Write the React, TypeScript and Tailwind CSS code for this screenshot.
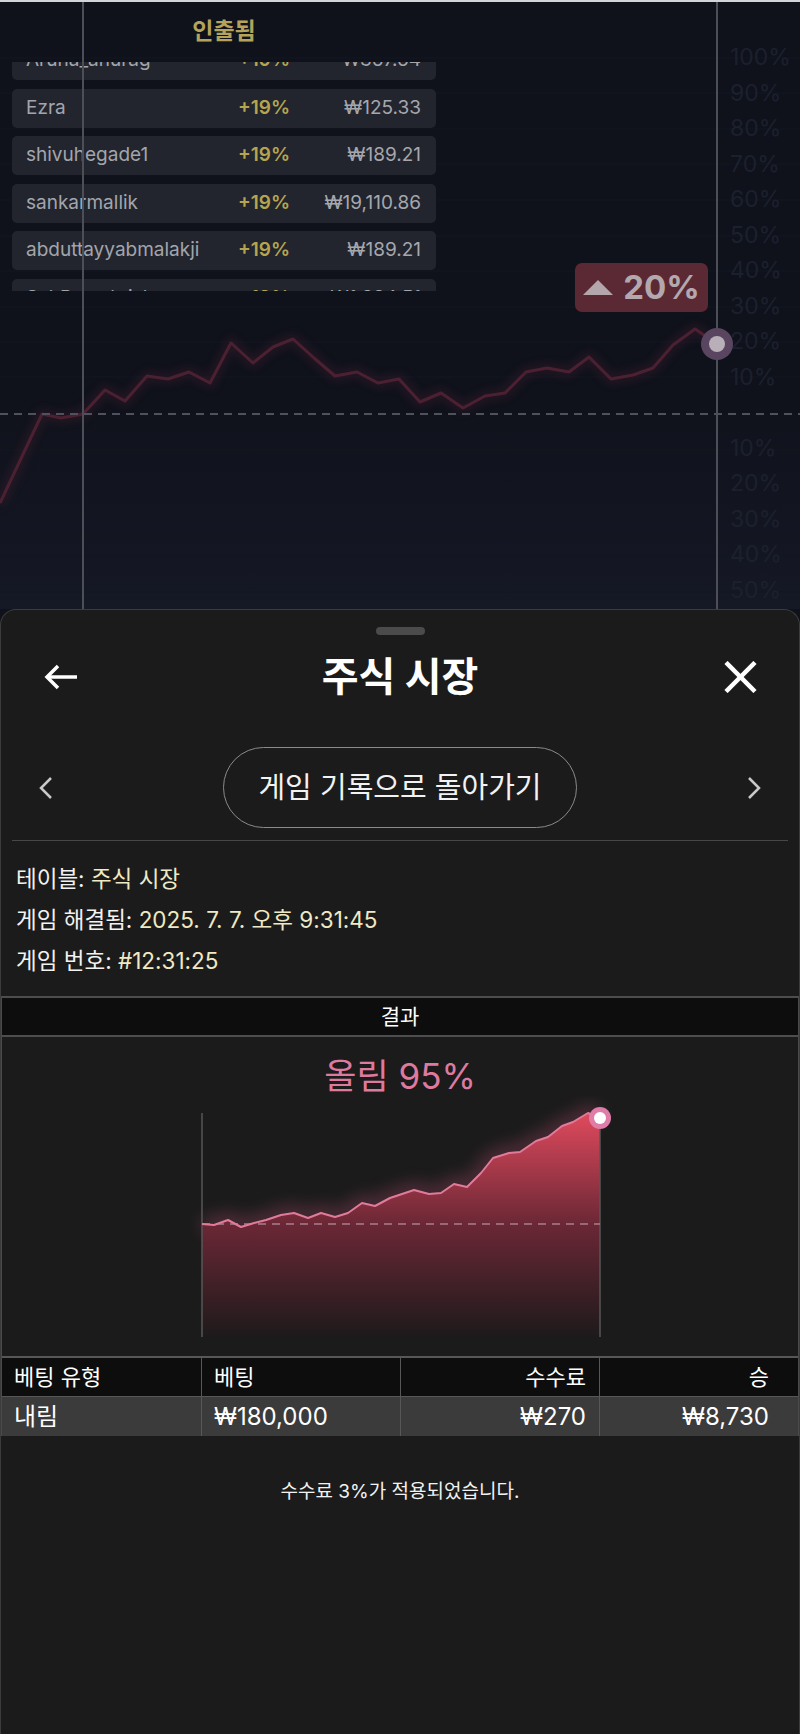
import React from 'react';

const rows = [
  { name: 'Aruna_anurag', pct: '+19%', amt: '₩367.64' },
  { name: 'Ezra', pct: '+19%', amt: '₩125.33' },
  { name: 'shivuhegade1', pct: '+19%', amt: '₩189.21' },
  { name: 'sankarmallik', pct: '+19%', amt: '₩19,110.86' },
  { name: 'abduttayyabmalakji', pct: '+19%', amt: '₩189.21' },
  { name: 'SahRamakrishnan', pct: '+19%', amt: '₩1,384.51' },
];

const axis = ['100%', '90%', '80%', '70%', '60%', '50%', '40%', '30%', '20%', '10%', '', '10%', '20%', '30%', '40%', '50%'];

// background game line (page coords)
const bgLine: [number, number][] = [
  [0, 503], [42, 414], [61, 418], [83, 414], [105, 390], [125, 401], [147, 376], [168, 379],
  [189, 372], [210, 383], [231, 343], [253, 363], [273, 347], [293, 339], [314, 358], [335, 376],
  [357, 372], [378, 383], [399, 379], [420, 402], [441, 393], [463, 408], [485, 396], [505, 393],
  [526, 372], [547, 368], [569, 372], [589, 357], [611, 379], [633, 375], [653, 368], [673, 345],
  [695, 329], [717, 344],
];

// result chart line (svg coords, y = page y - 1096)
const resLine: [number, number][] = [
  [201, 128], [213, 129], [227, 124], [240, 131], [253, 127], [265, 124], [280, 119], [293, 117],
  [307, 122], [320, 117], [334, 121], [347, 117], [361, 107], [374, 110], [389, 102], [413, 94],
  [428, 98], [440, 97], [453, 88], [466, 91], [480, 77], [492, 62], [508, 57], [519, 56],
  [535, 45], [547, 41], [561, 30], [572, 26], [587, 17], [599, 22],
];

const pts = (p: [number, number][]) => p.map(([x, y]) => `${x},${y}`).join(' ');

function GameBackground() {
  const gridYs = [58, 93, 129, 164, 200, 236, 271, 307, 342, 377, 450, 485, 520, 556, 592];
  return (
    <div className="relative h-[609px] bg-[#0f121b] font-['Inter','Noto_Sans_CJK_KR',sans-serif]">
      <div className="h-[2px] bg-[#d4d5d9]" />
      <svg className="absolute inset-0 pointer-events-none" width="800" height="609" viewBox="0 0 800 609">
        <defs>
          <linearGradient id="lowband" x1="0" y1="414" x2="0" y2="609" gradientUnits="userSpaceOnUse">
            <stop offset="0" stopColor="#10131c" />
            <stop offset="1" stopColor="#151825" />
          </linearGradient>
          <filter id="bgglow" x="-10%" y="-50%" width="120%" height="200%">
            <feGaussianBlur stdDeviation="5" />
          </filter>
        </defs>
        <rect x="0" y="414" width="800" height="195" fill="url(#lowband)" />
        {gridYs.map((y) => (
          <line key={y} x1="0" x2="800" y1={y} y2={y} stroke="#131722" strokeWidth="1" />
        ))}
      </svg>
      <div className="relative flex">
        <div className="ml-[12px] w-[424px]">
          <div className="h-[54px] flex items-center justify-center text-[23px] font-bold text-[#b5a35b] font-['Noto_Sans_CJK_KR',sans-serif]">
            인출됨
          </div>
          <div className="mt-[6px] h-[229px] overflow-hidden">
            <div className="-mt-[21px] flex flex-col gap-[8.5px]">
              {rows.map((r) => (
                <div key={r.name} className="h-[39px] shrink-0 rounded-[5px] bg-[#22252e] flex items-center pl-[14px] pr-[15px] text-[19px]">
                  <span className="flex-1 text-[#a2a5ac]">{r.name}</span>
                  <span className="font-semibold text-[#b6a54f]">{r.pct}</span>
                  <span className="w-[131px] text-right text-[#a5a7ad]">{r.amt}</span>
                </div>
              ))}
            </div>
          </div>
        </div>
        <div className="ml-auto w-[70px] pt-[38px] flex flex-col">
          {axis.map((a, i) => (
            <div key={i} className="h-[35.5px] leading-[35.5px] text-[23px] text-[#1c202e]">
              {a}
            </div>
          ))}
        </div>
      </div>
      <svg className="absolute inset-0 pointer-events-none" width="800" height="609" viewBox="0 0 800 609">
        <polyline points={pts(bgLine)} fill="none" stroke="#5a2338" strokeWidth="8" opacity="0.35" filter="url(#bgglow)" />
        <polyline points={pts(bgLine)} fill="none" stroke="#4b2132" strokeWidth="3" strokeLinejoin="round" />
        <line x1="0" x2="800" y1="414" y2="414" stroke="#4f525c" strokeWidth="2" strokeDasharray="8 6" />
        <line x1="83" x2="83" y1="2" y2="609" stroke="#4c4f58" strokeWidth="2" />
        <line x1="717" x2="717" y1="2" y2="609" stroke="#4c4f58" strokeWidth="2" />
        <circle cx="717" cy="344" r="16" fill="#5a4560" />
        <circle cx="717" cy="344" r="8" fill="#b9afb9" />
      </svg>
      <div className="absolute left-[575px] top-[263px] w-[133px] h-[49px] rounded-[7px] bg-[#5b2934] flex items-center justify-center gap-[10px]">
        <svg width="30" height="15" viewBox="0 0 30 15">
          <polygon points="15,0 30,15 0,15" fill="#b3a7ac" />
        </svg>
        <span className="text-[33px] font-bold text-[#b3a8ad] leading-none">20%</span>
      </div>
    </div>
  );
}

function ResultChart() {
  const area = `${pts(resLine)} 599,241 201,241`;
  return (
    <svg className="block" width="798" height="260" viewBox="1 0 798 260">
      <defs>
        <linearGradient id="fillg" x1="0" y1="17" x2="0" y2="241" gradientUnits="userSpaceOnUse">
          <stop offset="0" stopColor="#df4a5d" />
          <stop offset="0.5" stopColor="#6a2735" />
          <stop offset="1" stopColor="#1d1a1b" />
        </linearGradient>
        <filter id="glow" x="-20%" y="-50%" width="140%" height="200%">
          <feGaussianBlur stdDeviation="8" />
        </filter>
      </defs>
      <polyline points={pts(resLine)} fill="none" stroke="#c8577a" strokeWidth="16" opacity="0.3" filter="url(#glow)" />
      <polygon points={area} fill="url(#fillg)" />
      <line x1="201" x2="201" y1="17" y2="241" stroke="#575757" strokeWidth="1.5" />
      <line x1="599" x2="599" y1="17" y2="241" stroke="#575757" strokeWidth="1.5" />
      <line x1="201" x2="599" y1="128" y2="128" stroke="#a77f8c" strokeWidth="1.5" strokeDasharray="8 6" />
      <polyline points={pts(resLine)} fill="none" stroke="#e07b9b" strokeWidth="2" strokeLinejoin="round" />
      <circle cx="599" cy="22" r="11" fill="#e07ca8" />
      <circle cx="599" cy="22" r="6" fill="#ffffff" />
    </svg>
  );
}

function Sheet() {
  return (
    <div className="flex flex-col h-[1125px] bg-[#1b1b1b] border border-b-0 border-[#3c3c3c] rounded-t-[16px] text-white font-['Inter','Noto_Sans_CJK_KR',sans-serif]">
      <div className="mt-[17px] mx-auto w-[49px] h-[8px] rounded-full bg-[#4b4b4b]" />
      <div className="mt-[14px] h-[56px] grid grid-cols-3 items-center pl-[42px] pr-[42px]">
        <svg className="justify-self-start" width="35" height="26" viewBox="0 0 35 26" fill="none" stroke="#ffffff" strokeWidth="3.5">
          <path d="M34 13H4" />
          <path d="M15 2L4 13L15 24" />
        </svg>
        <div className="justify-self-center whitespace-nowrap text-[40px] font-bold leading-none">주식 시장</div>
        <svg className="justify-self-end" width="33" height="32" viewBox="0 0 33 32" fill="none" stroke="#ffffff" strokeWidth="4.5">
          <path d="M2 1.5L31 30.5" />
          <path d="M31 1.5L2 30.5" />
        </svg>
      </div>
      <div className="mt-[42px] h-[81px] flex items-center justify-between px-[37px]">
        <svg width="15" height="24" viewBox="0 0 15 24" fill="none" stroke="#c9c9c9" strokeWidth="2.5">
          <path d="M13 2L3 12L13 22" />
        </svg>
        <div className="w-[354px] h-[81px] rounded-full border-[1.5px] border-[#8a8a8a] flex items-center justify-center text-[29px] text-[#f2f2f2] whitespace-nowrap">
          게임 기록으로 돌아가기
        </div>
        <svg width="15" height="24" viewBox="0 0 15 24" fill="none" stroke="#c9c9c9" strokeWidth="2.5">
          <path d="M2 2L12 12L2 22" />
        </svg>
      </div>
      <div className="mt-[12px] mx-[11px] h-px bg-[#474747]" />
      <div className="mt-[17px] px-[15px] text-[22.5px] leading-[41px] text-[#f2f2f2]">
        <div>
          테이블: <span className="text-[#efe9c4]">주식 시장</span>
        </div>
        <div>
          게임 해결됨: <span className="text-[#efe9c4]">2025. 7. 7. 오후 9:31:45</span>
        </div>
        <div>
          게임 번호: <span className="text-[#efe9c4]">#12:31:25</span>
        </div>
      </div>
      <div className="mt-[15px] border-x border-[#4a4a4a]">
        <div className="h-[41px] border-y-2 border-[#4d4d4d] bg-[#0d0d0d] flex items-center justify-center text-[21px]">
          결과
        </div>
        <div className="pt-[19px]">
          <div className="h-[40px] leading-[40px] text-center text-[35px] text-[#df7a9f]">올림 95%</div>
          <ResultChart />
        </div>
        <div className="grid grid-cols-4 border-t-2 border-[#575757] text-[22px]">
          <div className="h-[38px] bg-[#0d0d0d] flex items-center px-[12px]">베팅 유형</div>
          <div className="h-[38px] bg-[#0d0d0d] flex items-center px-[12px] border-l border-[#575757]">베팅</div>
          <div className="h-[38px] bg-[#0d0d0d] flex items-center justify-end pr-[13px] border-l border-[#575757]">수수료</div>
          <div className="h-[38px] bg-[#0d0d0d] flex items-center justify-end pr-[29px] border-l border-[#575757]">승</div>
          <div className="h-[40px] bg-[#3b3b3b] flex items-center px-[12px] border-t border-[#575757] text-[24px]">내림</div>
          <div className="h-[40px] bg-[#3b3b3b] flex items-center px-[12px] border-t border-l border-[#575757] text-[24px]">₩180,000</div>
          <div className="h-[40px] bg-[#3b3b3b] flex items-center justify-end pr-[13px] border-t border-l border-[#575757] text-[24px]">₩270</div>
          <div className="h-[40px] bg-[#3b3b3b] flex items-center justify-end pr-[29px] border-t border-l border-[#575757] text-[24px]">₩8,730</div>
        </div>
      </div>
      <div className="mt-[44px] leading-[24px] text-center text-[19px] text-[#f2f2f2]">수수료 3%가 적용되었습니다.</div>
    </div>
  );
}

export default function App() {
  return (
    <div className="w-[800px] h-[1734px] overflow-hidden bg-[#0f121b]">
      <GameBackground />
      <Sheet />
    </div>
  );
}
